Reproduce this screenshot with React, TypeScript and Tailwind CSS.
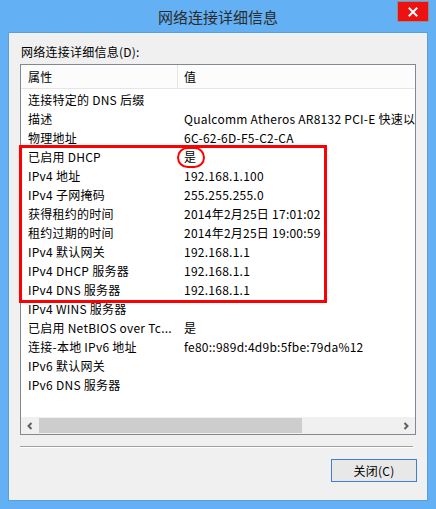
import React from "react";

const rows: [string, string][] = [
  ["连接特定的 DNS 后缀", ""],
  ["描述", "Qualcomm Atheros AR8132 PCI-E 快速以太网控制器"],
  ["物理地址", "6C-62-6D-F5-C2-CA"],
  ["已启用 DHCP", "是"],
  ["IPv4 地址", "192.168.1.100"],
  ["IPv4 子网掩码", "255.255.255.0"],
  ["获得租约的时间", "2014年2月25日 17:01:02"],
  ["租约过期的时间", "2014年2月25日 19:00:59"],
  ["IPv4 默认网关", "192.168.1.1"],
  ["IPv4 DHCP 服务器", "192.168.1.1"],
  ["IPv4 DNS 服务器", "192.168.1.1"],
  ["IPv4 WINS 服务器", ""],
  ["已启用 NetBIOS over Tc...", "是"],
  ["连接-本地 IPv6 地址", "fe80::989d:4d9b:5fbe:79da%12"],
  ["IPv6 默认网关", ""],
  ["IPv6 DNS 服务器", ""],
];

export default function App() {
  return (
    <div
      className="relative w-[436px] h-[509px] bg-[#63b0f4] flex flex-col text-[12px] text-[#000] tracking-[0.25px]"
      style={{ fontFamily: '"Noto Sans CJK SC", "Noto Sans", sans-serif' }}
    >
      {/* title bar */}
      <div className="relative h-[32px] flex items-center justify-center shrink-0">
        <span className="text-[15px] text-[#2b2b2b] leading-none pt-[1px] tracking-normal">网络连接详细信息</span>
        <div className="absolute left-[397px] top-[1px] w-[32px] h-[21px] bg-[#ee1111] border border-[#9a8a8a] flex items-center justify-center">
          <svg width="10" height="10" viewBox="0 0 10 10">
            <path d="M1.5 1.5 L8.5 8.5 M8.5 1.5 L1.5 8.5" stroke="#ffffff" strokeWidth="2" strokeLinecap="square" />
          </svg>
        </div>
      </div>

      {/* client */}
      <div className="mx-[8px] mb-[8px] flex-1 bg-[#f0f0f0] border border-[#5a9fd8] flex flex-col px-[11px] pt-[11px]">
        <div className="h-[16px] leading-[16px] pl-[1px]">网络连接详细信息(D):</div>
        <div className="mt-[4px] w-[396px] h-[371px] border border-[#828790] bg-white flex flex-col">
          {/* header */}
          <div className="h-[24px] shrink-0 flex border-b border-[#e5e5e5] bg-[#fcfcfc]">
            <div className="w-[157px] border-r border-[#e5e5e5] pl-[7px] flex items-center">属性</div>
            <div className="pl-[6px] flex items-center">值</div>
          </div>
          {/* rows */}
          <div className="h-[328px] shrink-0 pt-[1px] overflow-hidden">
            {rows.map(([k, v], i) => (
              <div key={i} className="h-[19px] flex items-center whitespace-nowrap overflow-hidden">
                <div className="w-[158px] shrink-0 pl-[7px] overflow-hidden">{k}</div>
                <div className="pl-[5px] min-w-0 overflow-hidden">{v}</div>
              </div>
            ))}
          </div>
          {/* scrollbar */}
          <div className="h-[17px] shrink-0 bg-[#f0f0f0] flex items-center">
            <div className="w-[18px] h-full flex items-center justify-center">
              <svg width="8" height="8" viewBox="0 0 8 8">
                <path d="M5.5 1 L2.5 4 L5.5 7" stroke="#606060" strokeWidth="2" fill="none" />
              </svg>
            </div>
            <div className="w-[263px] h-[15px] bg-[#cdcdcd]" />
            <div className="flex-1" />
            <div className="w-[18px] h-full flex items-center justify-center">
              <svg width="8" height="8" viewBox="0 0 8 8">
                <path d="M2.5 1 L5.5 4 L2.5 7" stroke="#606060" strokeWidth="2" fill="none" />
              </svg>
            </div>
          </div>
        </div>
        <div className="mt-[11px] w-[393px] h-[2px] border-t border-b border-t-[#a0a0a0] border-b-white" />
        <div className="mt-[11px] flex justify-end">
          <div className="w-[86px] h-[23px] border border-[#3c7fd8] bg-[#e8e8e8] flex items-center justify-center mr-[-1px]">
            关闭(C)
          </div>
        </div>
      </div>

      {/* annotations */}
      <div className="absolute left-[19px] top-[145px] w-[308px] h-[158px] border-[3px] border-[#ff0000]" />
      <div className="absolute left-[177px] top-[147px] w-[28px] h-[21px] border-2 border-[#ff0000] rounded-full" />
    </div>
  );
}
